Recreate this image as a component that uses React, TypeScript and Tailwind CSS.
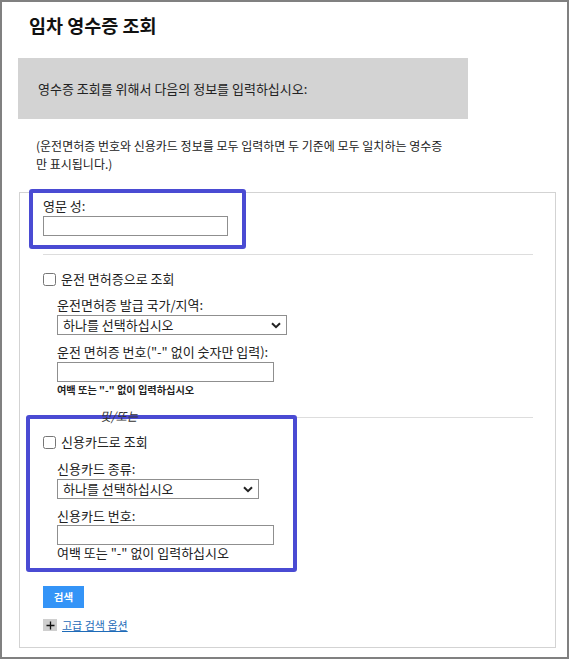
import React from "react"

const font = { fontFamily: '"Noto Sans CJK KR", "Noto Sans", sans-serif' }

const Chevron = () => (
  <svg width="10" height="7" viewBox="0 0 10 7" className="shrink-0">
    <path d="M1 1.2 L5 5.2 L9 1.2" fill="none" stroke="#222" strokeWidth="2" />
  </svg>
)

const Select = ({ width }: { width: string }) => (
  <div
    className={`${width} h-[20px] mt-[2px] border border-[#8f8f8f] bg-white flex items-center justify-between pl-[5px] pr-[5px] text-[13px] leading-[16px] text-[#222]`}
  >
    <span>하나를 선택하십시오</span>
    <Chevron />
  </div>
)

const TextInput = ({ width, className = "" }: { width: string; className?: string }) => (
  <div className={`${width} h-[20px] border border-[#8f8f8f] bg-white ${className}`} />
)

const CheckRow = ({ label }: { label: string }) => (
  <label className="flex items-center h-[16px] gap-[5px] text-[13px] leading-[16px] text-[#222]">
    <input type="checkbox" className="w-[13px] h-[13px] m-0" />
    <span>{label}</span>
  </label>
)

export default function App() {
  return (
    <div
      className="relative w-[569px] h-[659px] border-2 border-[#808080] bg-white text-[#222] overflow-hidden"
      style={font}
    >
      <div className="pl-[16px]">
        <h1 className="ml-[11px] mt-[11px] text-[18.5px] leading-[24px] font-bold text-[#111]">
          임차 영수증 조회
        </h1>

        <div className="mt-[21px] w-[450px] h-[61px] bg-[#d3d3d3] flex items-center pl-[20px] text-[13px] text-[#222]">
          영수증 조회를 위해서 다음의 정보를 입력하십시오:
        </div>

        <p className="mt-[18px] ml-[18px] text-[12px] leading-[18px] text-[#222]">
          (운전면허증 번호와 신용카드 정보를 모두 입력하면 두 기준에 모두 일치하는 영수증
          <br />만 표시됩니다.)
        </p>

        <div className="mt-[19px] ml-[1px] w-[537px] h-[456px] border border-[#d3d3d3] pl-[23px] pr-[22px] pt-[5px]">
          <div className="text-[13px] leading-[16px]">영문 성:</div>
          <TextInput width="w-[185px]" className="mt-[2px]" />

          <div className="mt-[18px] h-px bg-[#dddddd]" />

          <div className="mt-[16px]">
            <CheckRow label="운전 면허증으로 조회" />
          </div>
          <div className="ml-[14px]">
            <div className="mt-[10px] text-[13px] leading-[16px]">운전면허증 발급 국가/지역:</div>
            <Select width="w-[230px]" />
            <div className="mt-[9px] text-[13px] leading-[16px]">
              운전 면허증 번호("-" 없이 숫자만 입력):
            </div>
            <TextInput width="w-[217px]" className="mt-[2px]" />
            <div className="mt-[2px] text-[10.2px] leading-[12px] font-bold">
              여백 또는 "-" 없이 입력하십시오
            </div>
          </div>

          <div className="relative mt-[21px] h-px bg-[#dddddd]">
            <span className="absolute z-10 left-[57px] top-[-9px] text-[12px] leading-[16px] italic text-[#333]">
              및/또는
            </span>
          </div>

          <div className="mt-[16px]">
            <CheckRow label="신용카드로 조회" />
          </div>
          <div className="ml-[14px]">
            <div className="mt-[11px] text-[13px] leading-[16px]">신용카드 종류:</div>
            <Select width="w-[202px]" />
            <div className="mt-[9px] text-[13px] leading-[16px]">신용카드 번호:</div>
            <TextInput width="w-[217px]" className="mt-[1px]" />
            <div className="text-[13px] leading-[16px]">여백 또는 "-" 없이 입력하십시오</div>
          </div>

          <button className="mt-[25px] w-[41px] h-[22px] bg-[#3494f7] text-white text-[10.5px] font-bold flex items-center justify-center">
            검색
          </button>

          <div className="mt-[10px] flex items-center gap-[5px] h-[14px]">
            <span className="w-[14px] h-[12px] bg-[#cfcfcf] flex items-center justify-center">
              <svg width="9" height="9" viewBox="0 0 9 9">
                <path d="M4.5 0.5 V8.5 M0.5 4.5 H8.5" stroke="#111" strokeWidth="1.3" />
              </svg>
            </span>
            <a href="#" className="text-[11px] leading-[14px] text-[#1e6bb8] underline">
              고급 검색 옵션
            </a>
          </div>
        </div>
      </div>

      <div className="absolute left-[27px] top-[187px] w-[217px] h-[60px] border-4 border-[#4a4bd3] rounded-[3px] pointer-events-none" />
      <div className="absolute left-[24px] top-[413px] w-[271px] h-[157px] border-4 border-[#4a4bd3] rounded-[3px] pointer-events-none" />
    </div>
  )
}
